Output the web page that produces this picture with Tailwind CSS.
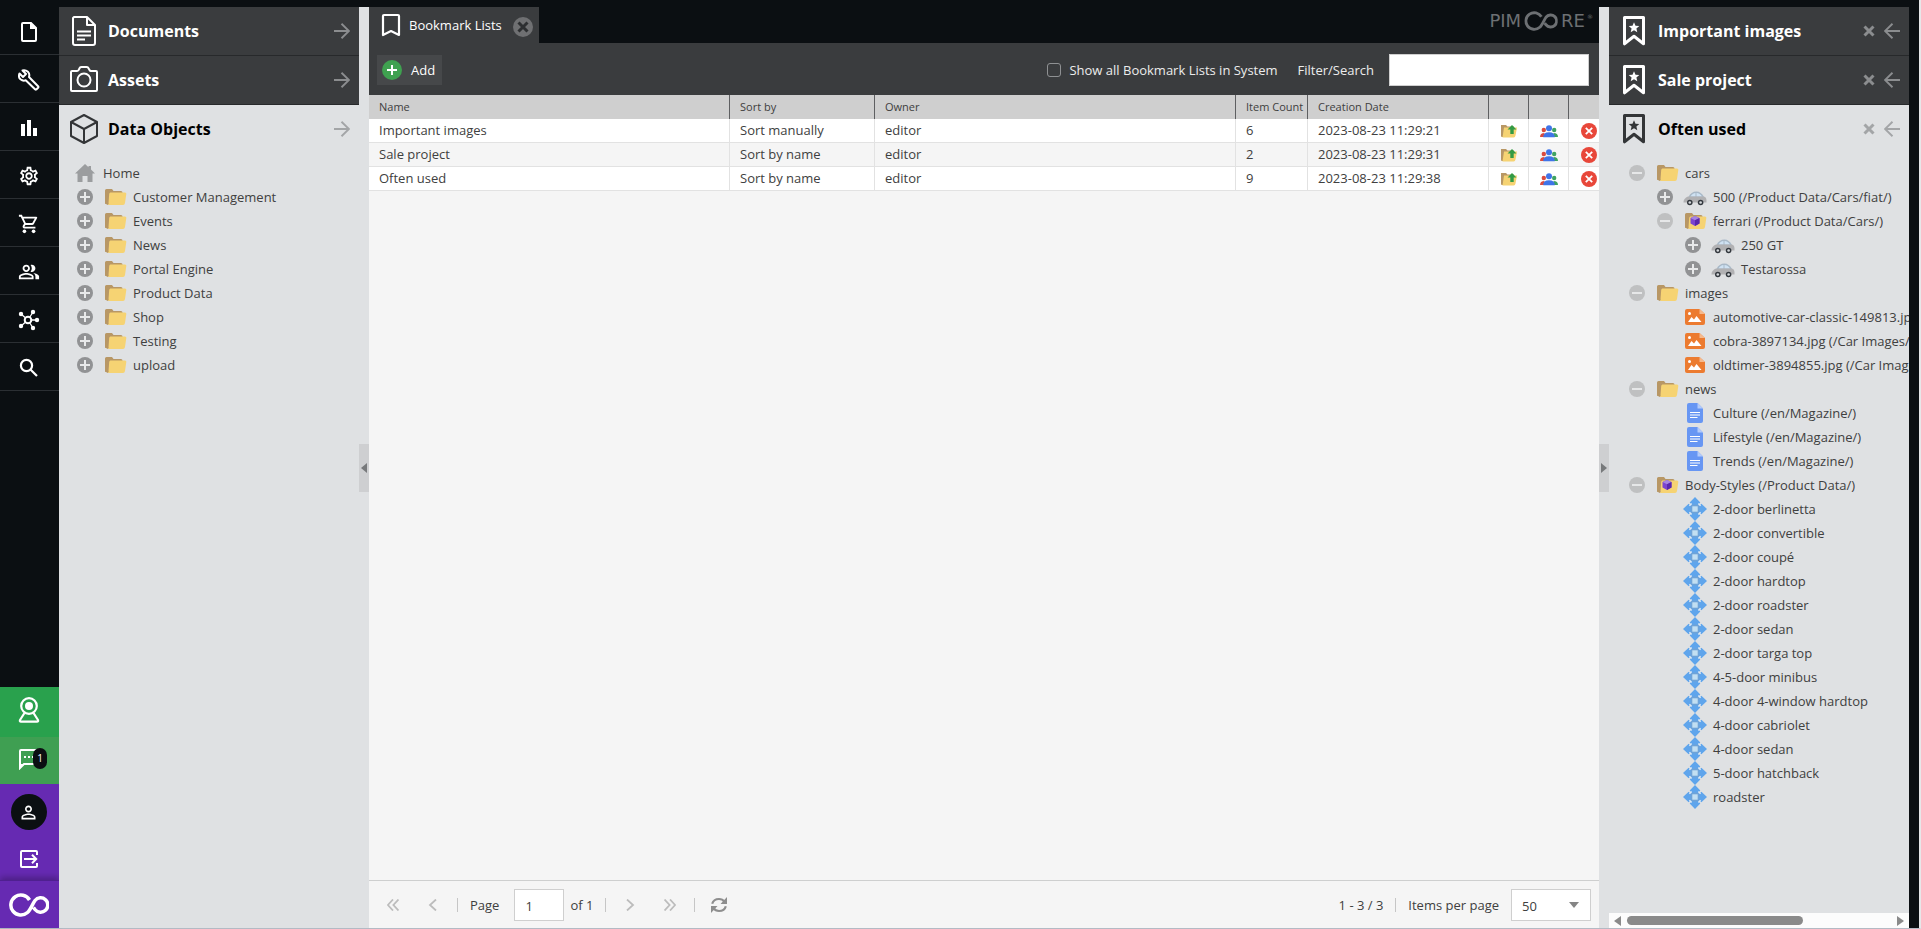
<!DOCTYPE html>
<html lang="en">
<head>
<meta charset="utf-8">
<title>Bookmark Lists</title>
<script src="https://cdn.jsdelivr.net/npm/@tailwindcss/browser@4"></script>
</head>
<body class="bg-[#0b0f12] font-['Open_Sans','Noto_Sans',sans-serif] text-[13px] leading-6 text-[#404040]">

<!-- Icon set -->
<svg class="hidden" aria-hidden="true">
  <symbol id="plus" viewBox="0 0 16 16"><circle cx="8" cy="8" r="8" fill="#919294"/><path d="M8 3v10M3 8h10" stroke="#e8e9ea" stroke-width="2"/></symbol>
  <symbol id="minus" viewBox="0 0 16 16"><circle cx="8" cy="8" r="8" fill="#bfc0c1"/><path d="M3 8h10" stroke="#e6e7e8" stroke-width="2"/></symbol>
  <symbol id="folder" viewBox="0 0 24 18"><path d="M2 2.500Q2 1 3.500 1H9l1.500 2H18q1.500 0 1.500 1.500V16H3.500Q2 16 2 14.500z" fill="#b89765"/><path d="M7.400 4.500H22q1.600 0 1.300 1.500l-1.300 9q-.3 2-2 2H4.800q.6-.4.700-1.500l.7-9.500q.2-1.500 1.200-1.500z" fill="#f6d373"/><path d="M2 14v1.500L4.800 17q.6-.4.700-1.500z" fill="#b89765"/></symbol>
  <symbol id="boxfolder" viewBox="0 0 24 18"><use href="#folder"/><path d="M12 4l4.500 2v5.500L12 14l-4.500-2.500V6z" fill="#7c45d0"/><path d="M12 4l4.500 2L12 8.200 7.500 6z" fill="#a684e0"/><path d="M12 8.200L16.500 6v5.500L12 14z" fill="#5a27ad"/></symbol>
  <symbol id="car" viewBox="0 0 24 18"><path d="M5.500 9Q8 3.500 13.500 3.500q4.500 0 7.500 5.500z" fill="#a9b9c8"/><path d="M7.500 8.500Q9.500 5 12.500 5v3.500zM13.500 5q3.500 0 5.500 3.500h-5.500z" fill="#cfe2f3"/><path d="M.5 14q0-3.500 4.500-5.500h16q2.500.8 2.500 3.500v2.500H.5z" fill="#b1b1b3"/><circle cx="6.800" cy="14.500" r="2.800" fill="#33383e"/><circle cx="17.600" cy="14.500" r="2.800" fill="#33383e"/><circle cx="6.800" cy="14.500" r="1.300" fill="#d5d9dc"/><circle cx="17.600" cy="14.500" r="1.300" fill="#d5d9dc"/></symbol>
  <symbol id="image" viewBox="0 0 24 18"><path d="M4 1h12.500l5.500 5v9q0 2-2 2H4q-2 0-2-2V3q0-2 2-2z" fill="#ec7b30"/><path d="M16.500 1L22 6h-5.500z" fill="#f6b98c"/><path d="M5 14l3.500-5 2.500 2.500L13.500 8l5 6z" fill="#fff"/><circle cx="6.500" cy="5.500" r="1.500" fill="#fff"/></symbol>
  <symbol id="doc" viewBox="0 0 24 20"><path d="M6 0h8.500L20 5.500V18q0 2-2 2H6q-2 0-2-2V2q0-2 2-2z" fill="#6796f3"/><path d="M14.500 0L20 5.500h-5.500z" fill="#b3cbfb"/><path d="M7 9.500h10M7 12h10M7 14.500h7.500" stroke="#fff" stroke-width="1.200"/></symbol>
  <symbol id="style" viewBox="0 0 24 24"><g fill="#5fa5ec"><path d="M12 0l5.300 5.600-3.300 4h-4l-3.300-4zM12 24l5.300-5.600-3.300-4h-4l-3.300 4zM0 12l5.600-5.300 4 3.300v4l-4 3.300zM24 12l-5.600-5.300-4 3.300v4l4 3.300z"/></g><rect x="7.500" y="7.500" width="9" height="9" rx="2.500" fill="#6ea3d8"/><rect x="9.300" y="9.300" width="5.400" height="5.400" fill="#c2dff2"/><path d="M8.600 6.600L6.400 8.800M15.400 6.600l2.200 2.200M8.600 17.400l-2.200-2.200M15.400 17.400l2.200-2.200" stroke="#dce9f5" stroke-width="1.400"/></symbol>
  <symbol id="arrow" viewBox="0 0 16 16"><path d="M0 8h15M7.500.8L15 8l-7.500 7.200" fill="none" stroke="currentColor" stroke-width="1.900"/></symbol>
  <symbol id="cross" viewBox="0 0 12 12"><path d="M1.500 1.500l9 9M10.500 1.500l-9 9" stroke="currentColor" stroke-width="3"/></symbol>
  <symbol id="starmark" viewBox="0 0 30 30"><path d="M5.500 1.500h19v26.300L15 20.300l-9.500 7.500z" fill="none" stroke="currentColor" stroke-width="3" stroke-linejoin="round"/><path d="M15 6.300l1.500 3.500 3.800.3-2.900 2.500.9 3.700-3.300-2-3.300 2 .9-3.700-2.900-2.500 3.800-.3z" fill="currentColor"/></symbol>
  <symbol id="openfolder" viewBox="0 0 18 18"><path d="M1 3h5l1.500 1.500H14V15H2q-1 0-1-1z" fill="#b89765"/><path d="M4 5.500h13l-1.500 8q-.3 2-1.800 2H2.500z" fill="#f6d373"/><path d="M12 3l4.500 4.500h-2.800V12h-3.400V7.500H7.500z" fill="#329b45"/></symbol>
  <symbol id="people" viewBox="0 0 20 18"><circle cx="4.800" cy="8" r="2.200" fill="#db4b3e"/><path d="M1 15q0-4 4.500-4v4z" fill="#db4b3e"/><circle cx="15.200" cy="8" r="2.200" fill="#3fa362"/><path d="M19 15q0-4-4.500-4v4z" fill="#3fa362"/><circle cx="10" cy="6.200" r="3" fill="#3f74e8"/><path d="M4.200 15.200q0-5 5.800-5t5.800 5z" fill="#3f74e8"/></symbol>
  <symbol id="delete" viewBox="0 0 16 16"><circle cx="8" cy="8" r="8" fill="#e8473a"/><path d="M4.800 4.800l6.400 6.400M11.200 4.800l-6.400 6.400" stroke="#fff" stroke-width="1.800"/></symbol>
  <symbol id="infinity" viewBox="0 0 40 24"><path d="M20.500 7A10 10 0 1 0 18.500 19.500C21.500 17 23.500 11 26 7.500A7.200 7.200 0 1 1 26 16.500L24.500 14.500" fill="none" stroke="currentColor" stroke-width="3.500"/></symbol>
</svg>

<div class="flex h-screen border-r-2 border-b border-r-[#e6e7e9] border-b-[#b3bac4]">

  <!-- Icon sidebar -->
  <nav aria-label="Main" class="flex w-[59px] shrink-0 flex-col pt-[7px] text-white">
    <div class="flex flex-col [&>button]:flex [&>button]:h-12 [&>button]:items-center [&>button]:justify-center [&>button]:border-b [&>button]:border-[#2b2f33] [&>button]:pt-0.5 [&>button]:pr-0.5 [&_svg]:size-[22px]">
      <button aria-label="File"><svg viewBox="0 0 22 22" fill="none" stroke="currentColor" stroke-width="2"><path d="M5 2h8l5 5v12q0 1-1 1H5q-1 0-1-1V3q0-1 1-1z"/><path d="M12 1l7 7h-7z" fill="currentColor" stroke="none"/></svg></button>
      <button aria-label="Tools"><svg viewBox="0 0 22 22" fill="none" stroke="currentColor" stroke-width="2" stroke-linejoin="round"><path d="M4.500 1.500l3.500 3.500-3 3L1.500 4.500Q0 8 2.500 10.300q2.500 2 5.200 1L17.300 20.500q.5.300 1 0l2-2q.3-.5 0-1L11 8q1-3-1-5.200Q7.500.8 4.500 1.500z"/></svg></button>
      <button aria-label="Marketing"><svg viewBox="0 0 22 22" fill="currentColor"><path d="M3 7h4v12H3zM9 3h4v16H9zM15 11h4v8h-4z"/></svg></button>
      <button aria-label="Settings"><svg viewBox="0 0 24 24" fill="currentColor"><path d="M19.430 12.980c.04-.32.07-.64.07-.98 0-.34-.03-.66-.07-.98l2.110-1.650c.19-.15.24-.42.12-.64l-2-3.460c-.09-.16-.26-.25-.44-.25-.06 0-.12.01-.17.03l-2.490 1c-.52-.4-1.080-.73-1.690-.98l-.38-2.650C14.460 2.180 14.250 2 14 2h-4c-.25 0-.46.18-.49.42l-.38 2.650c-.61.25-1.170.59-1.690.98l-2.490-1c-.06-.02-.12-.03-.18-.03-.17 0-.34.09-.43.25l-2 3.460c-.13.22-.07.49.12.64l2.110 1.650c-.04.32-.07.65-.07.98 0 .33.03.66.07.98l-2.110 1.650c-.19.15-.24.42-.12.64l2 3.460c.09.16.26.25.44.25.06 0 .12-.01.17-.03l2.490-1c.52.4 1.080.73 1.690.98l.38 2.650c.03.24.24.42.49.42h4c.25 0 .46-.18.49-.42l.38-2.650c.61-.25 1.170-.59 1.690-.98l2.490 1c.06.02.12.03.18.03.17 0 .34-.09.43-.25l2-3.460c.12-.22.07-.49-.12-.64l-2.110-1.650zm-1.980-1.710c.04.31.05.52.05.73 0 .21-.02.43-.05.73l-.14 1.130.89.7 1.080.84-.7 1.210-1.270-.51-1.040-.42-.9.68c-.43.32-.84.56-1.250.73l-1.060.43-.16 1.130-.2 1.350h-1.400l-.19-1.350-.16-1.130-1.060-.43c-.43-.18-.83-.41-1.230-.71l-.91-.7-1.060.43-1.270.51-.7-1.210 1.080-.84.89-.7-.14-1.130c-.03-.31-.05-.54-.05-.74s.02-.43.05-.73l.14-1.130-.89-.7-1.080-.84.7-1.210 1.270.51 1.040.42.9-.68c.43-.32.84-.56 1.250-.73l1.060-.43.16-1.130.2-1.350h1.390l.19 1.350.16 1.130 1.060.43c.43.18.83.41 1.230.71l.91.7 1.060-.43 1.270-.51.7 1.210-1.070.85-.89.7.14 1.130zM12 8c-2.210 0-4 1.790-4 4s1.790 4 4 4 4-1.790 4-4-1.790-4-4-4zm0 6c-1.100 0-2-.9-2-2s.9-2 2-2 2 .9 2 2-.9 2-2 2z"/></svg></button>
      <button aria-label="E-Commerce"><svg viewBox="0 0 24 24" fill="currentColor"><path d="M15.550 13c.75 0 1.410-.41 1.750-1.030l3.580-6.490c.37-.66-.11-1.480-.87-1.480H5.210l-.94-2H1v2h2l3.600 7.590-1.350 2.440C4.520 15.370 5.480 17 7 17h12v-2H7l1.100-2h7.450zM6.160 6h12.150l-2.760 5H8.530L6.160 6z"/><circle cx="7" cy="20" r="2"/><circle cx="17" cy="20" r="2"/></svg></button>
      <button aria-label="Customers"><svg viewBox="0 0 24 24" fill="currentColor"><path d="M16.670 13.130C18.040 14.060 19 15.320 19 17v3h4v-3c0-2.180-3.570-3.470-6.330-3.870zM15 12c2.210 0 4-1.790 4-4s-1.790-4-4-4c-.47 0-.91.1-1.330.24C14.500 5.270 15 6.580 15 8s-.5 2.730-1.330 3.760c.42.14.86.24 1.330.24zM9 12c2.210 0 4-1.790 4-4s-1.790-4-4-4-4 1.790-4 4 1.790 4 4 4zm0-6c1.100 0 2 .9 2 2s-.9 2-2 2-2-.9-2-2 .9-2 2-2zm0 7c-2.670 0-8 1.340-8 4v3h16v-3c0-2.660-5.330-4-8-4zm6 5H3v-.99C3.200 16.290 6.300 15 9 15s5.800 1.290 6 2v1z"/></svg></button>
      <button aria-label="Data hub"><svg viewBox="0 0 22 22" fill="currentColor"><path d="M10 11L3 5M10 11l5-8M10 11h9M10 11l5 8M10 11l-7 6" stroke="currentColor" stroke-width="1.300"/><circle cx="10" cy="11" r="3.300" fill="#0b0f12" stroke="currentColor" stroke-width="2"/><circle cx="3" cy="5" r="2.200"/><circle cx="15" cy="3" r="2.200"/><circle cx="19" cy="11" r="2.200"/><circle cx="15" cy="19" r="2.200"/><circle cx="3" cy="17" r="2.200"/></svg></button>
      <button aria-label="Search"><svg viewBox="0 0 22 22" fill="none" stroke="currentColor" stroke-width="2.200"><circle cx="8.500" cy="8.500" r="5.600"/><path d="M12.500 12.500l6.500 6.500"/></svg></button>
    </div>

    <div class="mt-auto flex flex-col">
      <button aria-label="Perspectives" class="flex h-[50px] items-center justify-center bg-[#29a14d] pr-0.5 pb-1"><svg class="h-[26px] w-[22px]" viewBox="0 0 22 26" fill="none" stroke="currentColor" stroke-width="2.200"><circle cx="11" cy="9" r="7.800"/><circle cx="11" cy="9" r="4" fill="currentColor" stroke="none"/><path d="M6.500 16L2 23q-.6 1.700 1 1.700h16q1.600 0 1-1.700l-4.500-7" stroke-linejoin="round"/></svg></button>
      <button aria-label="Notifications, 1 new" class="relative flex h-[47px] items-center justify-center bg-[#3f9f52] pr-0.5 pb-1"><svg class="size-[22px]" viewBox="0 0 22 22" fill="none" stroke="currentColor" stroke-width="2"><path d="M2 20V3q0-1 1-1h17v14H6z"/><path d="M6 9h2M10 9h2M14 9h2"/><path d="M1 21v-5h5z" fill="currentColor" stroke="none"/></svg><span class="absolute top-[11px] left-[33px] h-[21px] w-[14px] rounded-full bg-[#0b0f12] text-center text-[10px] leading-[21px]">1</span></button>
      <div class="flex h-24 flex-col items-center bg-[#662ab2] pt-2.5 pr-0.5">
        <button aria-label="User" class="flex size-9 items-center justify-center rounded-full bg-[#0b0f12]"><svg class="size-[21px]" viewBox="0 0 24 24" fill="currentColor"><path d="M12 5.900c1.160 0 2.100.94 2.100 2.100s-.94 2.100-2.100 2.100S9.900 9.160 9.900 8s.94-2.100 2.100-2.100m0 9c2.970 0 6.100 1.460 6.100 2.100v1.100H5.900V17c0-.64 3.130-2.100 6.100-2.100M12 4C9.790 4 8 5.790 8 8s1.790 4 4 4 4-1.790 4-4-1.790-4-4-4zm0 9c-2.670 0-8 1.340-8 4v3h16v-3c0-2.660-5.330-4-8-4z"/></svg></button>
        <button aria-label="Logout" class="mt-5"><svg class="size-[18px]" viewBox="0 0 18 18" fill="none" stroke="currentColor" stroke-width="2"><path d="M17 5V2q0-1-1-1H2q-1 0-1 1v14q0 1 1 1h14q1 0 1-1v-3"/><path d="M4 9h12M12 4.800L16.200 9 12 13.200"/></svg></button>
      </div>
      <a href="#" aria-label="Pimcore" class="flex h-12 items-center justify-center border-t border-[#4f2090] bg-[#662ab2] pr-0.5 shadow-[0_-3px_6px_rgba(0,0,0,0.25)]"><svg class="h-6 w-10"><use href="#infinity"/></svg></a>
    </div>
  </nav>

  <!-- Left accordion -->
  <aside class="mt-[7px] flex w-[300px] shrink-0 flex-col bg-[#dfe1e3]">
    <button class="flex h-[49px] items-center gap-[9px] border-b border-[#27292b] bg-[#3a3c3e] pr-[9px] pl-2.5 text-left text-base font-bold text-white">
      <svg class="size-[30px]" viewBox="0 0 30 30" fill="none" stroke="currentColor" stroke-width="2" stroke-linejoin="round"><path d="M5 1h13l8 8v18q0 2-2 2H6q-2 0-2-2V2z"/><path d="M18 1v8h8M8 15.500h14M8 19.500h14M8 23.500h8"/></svg>
      <span class="grow">Documents</span><svg class="size-4 text-[#8b8d8f]"><use href="#arrow"/></svg>
    </button>
    <button class="flex h-[49px] items-center gap-[9px] border-b border-[#27292b] bg-[#3a3c3e] pr-[9px] pl-2.5 text-left text-base font-bold text-white">
      <svg class="size-[30px]" viewBox="0 0 30 30" fill="none" stroke="currentColor" stroke-width="2" stroke-linejoin="round"><path d="M3 6h5q1 0 1.600-1L11 2.500Q11.500 2 12.500 2h5q1 0 1.500.5L20.500 5q.5 1 1.500 1h5q1 0 1 1v18q0 1-1 1H3q-1 0-1-1V7q0-1 1-1z"/><circle cx="15" cy="15" r="6.500"/></svg>
      <span class="grow">Assets</span><svg class="size-4 text-[#8b8d8f]"><use href="#arrow"/></svg>
    </button>
    <button class="flex h-12 items-center gap-[9px] pr-[9px] pl-2.5 text-left text-base font-bold text-black">
      <svg class="size-[30px] text-[#333537]" viewBox="0 0 30 30" fill="none" stroke="currentColor" stroke-width="2" stroke-linejoin="round"><path d="M15 1l13 7v14l-13 7-13-7V8z"/><path d="M2 8l13 7 13-7M15 15v14"/></svg>
      <span class="grow">Data Objects</span><svg class="size-4 text-[#a3a5a7]"><use href="#arrow"/></svg>
    </button>
    <ul class="pt-2 pl-[18px] whitespace-nowrap [&>li]:flex [&>li]:h-6 [&>li]:items-center">
      <li class="gap-2"><svg class="-ml-0.5 h-[18px] w-5" viewBox="0 0 20 18" fill="#9b9d9f"><path d="M10 0l3.500 3.300V2H16v3.600L20 9.500h-2.500V18h-5v-6h-5v6h-5V9.500H0z"/></svg>Home</li>
      <li><svg class="size-4"><use href="#plus"/></svg><svg class="mr-1.5 ml-2.5 h-[18px] w-6"><use href="#folder"/></svg>Customer Management</li>
      <li><svg class="size-4"><use href="#plus"/></svg><svg class="mr-1.5 ml-2.5 h-[18px] w-6"><use href="#folder"/></svg>Events</li>
      <li><svg class="size-4"><use href="#plus"/></svg><svg class="mr-1.5 ml-2.5 h-[18px] w-6"><use href="#folder"/></svg>News</li>
      <li><svg class="size-4"><use href="#plus"/></svg><svg class="mr-1.5 ml-2.5 h-[18px] w-6"><use href="#folder"/></svg>Portal Engine</li>
      <li><svg class="size-4"><use href="#plus"/></svg><svg class="mr-1.5 ml-2.5 h-[18px] w-6"><use href="#folder"/></svg>Product Data</li>
      <li><svg class="size-4"><use href="#plus"/></svg><svg class="mr-1.5 ml-2.5 h-[18px] w-6"><use href="#folder"/></svg>Shop</li>
      <li><svg class="size-4"><use href="#plus"/></svg><svg class="mr-1.5 ml-2.5 h-[18px] w-6"><use href="#folder"/></svg>Testing</li>
      <li><svg class="size-4"><use href="#plus"/></svg><svg class="mr-1.5 ml-2.5 h-[18px] w-6"><use href="#folder"/></svg>upload</li>
    </ul>
  </aside>

  <div class="mt-[7px] flex w-2.5 shrink-0 items-center bg-[#dfe1e3]">
    <button aria-label="Collapse left panel" class="flex h-12 w-2.5 items-center justify-center bg-[#cecfd1]"><svg class="h-2.5 w-1.5" viewBox="0 0 6 10" fill="#77797b"><path d="M6 0v10L0 5z"/></svg></button>
  </div>

  <!-- Main panel -->
  <main class="flex min-w-0 grow flex-col overflow-hidden pt-[7px]">
    <div class="flex h-9 shrink-0 justify-between pr-1.5">
      <div class="flex w-[170px] items-center bg-[#3a3c3e] pl-[11px] text-white">
        <svg class="h-6 w-6 shrink-0" viewBox="0 0 24 24" fill="none" stroke="currentColor" stroke-width="2.200" stroke-linejoin="round"><path d="M4 2h14q1 0 1 1v19l-8-4-8 4V3q0-1 1-1z"/></svg>
        <span class="ml-[5px] grow whitespace-nowrap">Bookmark Lists</span>
        <button aria-label="Close tab" class="mt-1 mr-1.5 flex size-5 items-center justify-center rounded-full bg-[#6f7072] text-[#2d2f31]"><svg class="size-3"><use href="#cross"/></svg></button>
      </div>
      <a href="#" aria-label="Pimcore" class="flex h-[27px] items-center gap-0.5 font-['DejaVu_Sans',sans-serif] text-[18px] text-[#6d7073]">PIM<svg class="h-5 w-9" viewBox="0 0 40 24"><use href="#infinity"/></svg>RE<span class="-mt-2 text-[6px]">®</span></a>
    </div>

    <div class="flex h-[52px] shrink-0 items-center bg-[#3a3c3e] pt-0.5 pr-2.5 pl-2 text-[#ececec]">
      <button class="flex h-[30px] items-center gap-[9px] bg-[#46484a] pr-[7px] pl-[5px] text-white"><svg class="size-5" viewBox="0 0 20 20"><circle cx="10" cy="10" r="10" fill="#3fa150"/><path d="M10 5v10M5 10h10" stroke="#fff" stroke-width="2"/></svg>Add</button>
      <input id="showall" type="checkbox" class="ml-auto size-[14px] appearance-none rounded-[3px] border border-[#8f9193]">
      <label for="showall" class="ml-2 whitespace-nowrap">Show all Bookmark Lists in System</label>
      <label for="filter" class="ml-5 whitespace-nowrap">Filter/Search</label>
      <input id="filter" type="text" class="ml-[15px] h-8 w-[200px] border border-[#cfcfcf] bg-white px-2 text-[#404040]">
    </div>

    <div class="min-h-0 grow overflow-hidden bg-[#f5f5f5]">
      <table class="w-[calc(100%+10px)] table-fixed border-separate border-spacing-0 text-left">
        <colgroup><col><col class="w-[145px]"><col><col class="w-[72px]"><col class="w-[181px]"><col class="w-10"><col class="w-10"><col class="w-10"></colgroup>
        <thead class="bg-[#cfcfcf] text-[11px] [&_th]:h-6 [&_th]:border-r [&_th]:border-r-[#5e5f61] [&_th]:p-0 [&_th]:pl-2.5 [&_th]:font-normal [&_th]:whitespace-nowrap">
          <tr><th>Name</th><th>Sort by</th><th>Owner</th><th>Item Count</th><th>Creation Date</th><th aria-label="Open"></th><th aria-label="Share"></th><th aria-label="Delete"></th></tr>
        </thead>
        <tbody class="bg-white [&_button]:flex [&_button]:h-[23px] [&_button]:w-full [&_button]:items-center [&_button]:justify-center [&_td]:h-6 [&_td]:border-r [&_td]:border-b [&_td]:border-[#e2e2e2] [&_td]:p-0 [&_td]:leading-[23px] [&_td:nth-child(-n+5)]:pl-2.5">
          <tr><td>Important images</td><td>Sort manually</td><td>editor</td><td>6</td><td>2023-08-23 11:29:21</td><td><button aria-label="Open"><svg class="size-[18px]"><use href="#openfolder"/></svg></button></td><td><button aria-label="Share"><svg class="h-[18px] w-5"><use href="#people"/></svg></button></td><td><button aria-label="Delete"><svg class="size-4"><use href="#delete"/></svg></button></td></tr>
          <tr class="bg-[#f5f5f5]"><td>Sale project</td><td>Sort by name</td><td>editor</td><td>2</td><td>2023-08-23 11:29:31</td><td><button aria-label="Open"><svg class="size-[18px]"><use href="#openfolder"/></svg></button></td><td><button aria-label="Share"><svg class="h-[18px] w-5"><use href="#people"/></svg></button></td><td><button aria-label="Delete"><svg class="size-4"><use href="#delete"/></svg></button></td></tr>
          <tr><td>Often used</td><td>Sort by name</td><td>editor</td><td>9</td><td>2023-08-23 11:29:38</td><td><button aria-label="Open"><svg class="size-[18px]"><use href="#openfolder"/></svg></button></td><td><button aria-label="Share"><svg class="h-[18px] w-5"><use href="#people"/></svg></button></td><td><button aria-label="Delete"><svg class="size-4"><use href="#delete"/></svg></button></td></tr>
        </tbody>
      </table>
    </div>

    <div class="flex h-12 shrink-0 items-center border-t border-[#cecfcf] bg-[#f5f5f5] pr-2 pl-3 [&>button]:flex [&>button]:size-6 [&>button]:items-center [&>button]:justify-center [&>hr]:mx-3 [&>hr]:h-[14px] [&>hr]:border-t-0 [&>hr]:border-l [&>hr]:border-[#c6c6c6]">
      <button aria-label="First page"><svg class="size-3" viewBox="0 0 12 12" fill="none" stroke="#bcbcbc" stroke-width="1.800"><path d="M6 0.500L.9 6 6 11.500M11.500.5L6.400 6l5.100 5.500"/></svg></button>
      <button aria-label="Previous page" class="ml-4"><svg class="size-3" viewBox="0 0 12 12" fill="none" stroke="#bcbcbc" stroke-width="1.800"><path d="M9 .5L3 6l6 5.500"/></svg></button>
      <hr>
      <label for="page">Page</label>
      <input id="page" type="text" value="1" class="ml-[15px] h-8 w-[50px] border border-[#cfcfcf] bg-white px-2.5 pt-0.5">
      <span class="ml-1.5">of 1</span>
      <hr>
      <button aria-label="Next page"><svg class="size-3" viewBox="0 0 12 12" fill="none" stroke="#bcbcbc" stroke-width="1.800"><path d="M3 .5L9 6l-6 5.500"/></svg></button>
      <button aria-label="Last page" class="ml-4"><svg class="size-3" viewBox="0 0 12 12" fill="none" stroke="#bcbcbc" stroke-width="1.800"><path d="M.5.5L5.600 6 .5 11.500M6 .5L11.100 6 6 11.500"/></svg></button>
      <hr>
      <button aria-label="Refresh"><svg class="size-4" viewBox="0 0 16 16" fill="none" stroke="#8e8e8e" stroke-width="2.200"><path d="M1.200 6.800Q2.500 2 8 2q3.500 0 5.500 2.800M14.800 9.200Q13.500 14 8 14q-3.500 0-5.500-2.800"/><path d="M16 0v7H9.500zM0 16V9h6.500z" fill="#8e8e8e" stroke="none"/></svg></button>
      <span class="ml-auto">1 - 3 / 3</span>
      <hr>
      <label for="size">Items per page</label>
      <div class="relative ml-3">
        <select id="size" class="h-8 w-20 appearance-none border border-[#cfcfcf] bg-white px-2.5 pt-0.5"><option>50</option></select>
        <svg class="pointer-events-none absolute top-[13px] right-3 h-[6px] w-2.5" viewBox="0 0 10 6" fill="#858585"><path d="M0 0h10L5 6z"/></svg>
      </div>
    </div>
  </main>

  <div class="mt-[7px] flex w-2.5 shrink-0 items-center bg-[#dfe1e3]">
    <button aria-label="Collapse right panel" class="flex h-12 w-2.5 items-center justify-center bg-[#cecfd1]"><svg class="h-2.5 w-1.5" viewBox="0 0 6 10" fill="#77797b"><path d="M0 0v10l6-5z"/></svg></button>
  </div>

  <!-- Right accordion -->
  <aside class="mt-[7px] mr-2.5 flex w-[300px] shrink-0 flex-col overflow-hidden bg-[#dfe1e3]">
    <div class="flex h-[49px] shrink-0 items-center gap-[9px] border-b border-[#27292b] bg-[#3a3c3e] pr-[9px] pl-2.5 text-white">
      <svg class="size-[30px]"><use href="#starmark"/></svg><h2 class="grow text-base font-bold">Important images</h2>
      <button aria-label="Remove" class="text-[#8b8d8f]"><svg class="size-3"><use href="#cross"/></svg></button>
      <button aria-label="Move left" class="text-[#8b8d8f]"><svg class="size-4 rotate-180"><use href="#arrow"/></svg></button>
    </div>
    <div class="flex h-[49px] shrink-0 items-center gap-[9px] border-b border-[#27292b] bg-[#3a3c3e] pr-[9px] pl-2.5 text-white">
      <svg class="size-[30px]"><use href="#starmark"/></svg><h2 class="grow text-base font-bold">Sale project</h2>
      <button aria-label="Remove" class="text-[#8b8d8f]"><svg class="size-3"><use href="#cross"/></svg></button>
      <button aria-label="Move left" class="text-[#8b8d8f]"><svg class="size-4 rotate-180"><use href="#arrow"/></svg></button>
    </div>
    <div class="flex h-12 shrink-0 items-center gap-[9px] pr-[9px] pl-2.5 text-black">
      <svg class="size-[30px] text-[#333537]"><use href="#starmark"/></svg><h2 class="grow text-base font-bold">Often used</h2>
      <button aria-label="Remove" class="text-[#a3a5a7]"><svg class="size-3"><use href="#cross"/></svg></button>
      <button aria-label="Move left" class="text-[#a3a5a7]"><svg class="size-4 rotate-180"><use href="#arrow"/></svg></button>
    </div>
    <ul class="min-h-0 grow overflow-hidden pt-2 pl-5 whitespace-nowrap [&_div]:flex [&_div]:h-6 [&_div]:items-center [&_ul]:pl-7">
      <li><div><svg class="size-4"><use href="#minus"/></svg><svg class="mr-1.5 ml-2.5 h-[18px] w-6"><use href="#folder"/></svg>cars</div>
        <ul>
          <li><div><svg class="size-4"><use href="#plus"/></svg><svg class="mr-1.5 ml-2.5 h-[18px] w-6"><use href="#car"/></svg>500 (/Product Data/Cars/fiat/)</div></li>
          <li><div><svg class="size-4"><use href="#minus"/></svg><svg class="mr-1.5 ml-2.5 h-[18px] w-6"><use href="#boxfolder"/></svg>ferrari (/Product Data/Cars/)</div>
            <ul>
              <li><div><svg class="size-4"><use href="#plus"/></svg><svg class="mr-1.5 ml-2.5 h-[18px] w-6"><use href="#car"/></svg>250 GT</div></li>
              <li><div><svg class="size-4"><use href="#plus"/></svg><svg class="mr-1.5 ml-2.5 h-[18px] w-6"><use href="#car"/></svg>Testarossa</div></li>
            </ul>
          </li>
        </ul>
      </li>
      <li><div><svg class="size-4"><use href="#minus"/></svg><svg class="mr-1.5 ml-2.5 h-[18px] w-6"><use href="#folder"/></svg>images</div>
        <ul>
          <li><div><svg class="mr-1.5 ml-[26px] h-[18px] w-6 shrink-0"><use href="#image"/></svg>automotive-car-classic-149813.jpg (/Car Images/)</div></li>
          <li><div><svg class="mr-1.5 ml-[26px] h-[18px] w-6 shrink-0"><use href="#image"/></svg>cobra-3897134.jpg (/Car Images/)</div></li>
          <li><div><svg class="mr-1.5 ml-[26px] h-[18px] w-6 shrink-0"><use href="#image"/></svg>oldtimer-3894855.jpg (/Car Images/)</div></li>
        </ul>
      </li>
      <li><div><svg class="size-4"><use href="#minus"/></svg><svg class="mr-1.5 ml-2.5 h-[18px] w-6"><use href="#folder"/></svg>news</div>
        <ul>
          <li><div><svg class="mr-1.5 ml-[26px] h-5 w-6"><use href="#doc"/></svg>Culture (/en/Magazine/)</div></li>
          <li><div><svg class="mr-1.5 ml-[26px] h-5 w-6"><use href="#doc"/></svg>Lifestyle (/en/Magazine/)</div></li>
          <li><div><svg class="mr-1.5 ml-[26px] h-5 w-6"><use href="#doc"/></svg>Trends (/en/Magazine/)</div></li>
        </ul>
      </li>
      <li><div><svg class="size-4"><use href="#minus"/></svg><svg class="mr-1.5 ml-2.5 h-[18px] w-6"><use href="#boxfolder"/></svg>Body-Styles (/Product Data/)</div>
        <ul>
          <li><div><svg class="mr-1.5 ml-[26px] size-6"><use href="#style"/></svg>2-door berlinetta</div></li>
          <li><div><svg class="mr-1.5 ml-[26px] size-6"><use href="#style"/></svg>2-door convertible</div></li>
          <li><div><svg class="mr-1.5 ml-[26px] size-6"><use href="#style"/></svg>2-door coupé</div></li>
          <li><div><svg class="mr-1.5 ml-[26px] size-6"><use href="#style"/></svg>2-door hardtop</div></li>
          <li><div><svg class="mr-1.5 ml-[26px] size-6"><use href="#style"/></svg>2-door roadster</div></li>
          <li><div><svg class="mr-1.5 ml-[26px] size-6"><use href="#style"/></svg>2-door sedan</div></li>
          <li><div><svg class="mr-1.5 ml-[26px] size-6"><use href="#style"/></svg>2-door targa top</div></li>
          <li><div><svg class="mr-1.5 ml-[26px] size-6"><use href="#style"/></svg>4-5-door minibus</div></li>
          <li><div><svg class="mr-1.5 ml-[26px] size-6"><use href="#style"/></svg>4-door 4-window hardtop</div></li>
          <li><div><svg class="mr-1.5 ml-[26px] size-6"><use href="#style"/></svg>4-door cabriolet</div></li>
          <li><div><svg class="mr-1.5 ml-[26px] size-6"><use href="#style"/></svg>4-door sedan</div></li>
          <li><div><svg class="mr-1.5 ml-[26px] size-6"><use href="#style"/></svg>5-door hatchback</div></li>
          <li><div><svg class="mr-1.5 ml-[26px] size-6"><use href="#style"/></svg>roadster</div></li>
        </ul>
      </li>
    </ul>
    <div class="flex h-[15px] shrink-0 items-center bg-[#fcfcfc] px-1">
      <button aria-label="Scroll left"><svg class="h-2.5 w-2" viewBox="0 0 8 10" fill="#8a8a8a"><path d="M8 0v10L1 5z"/></svg></button>
      <div class="mx-1.5 grow"><div class="h-[9px] w-2/3 rounded-full bg-[#8a8a8a]"></div></div>
      <button aria-label="Scroll right"><svg class="h-2.5 w-2" viewBox="0 0 8 10" fill="#8a8a8a"><path d="M0 0v10l7-5z"/></svg></button>
    </div>
  </aside>
</div>
</body>
</html>
